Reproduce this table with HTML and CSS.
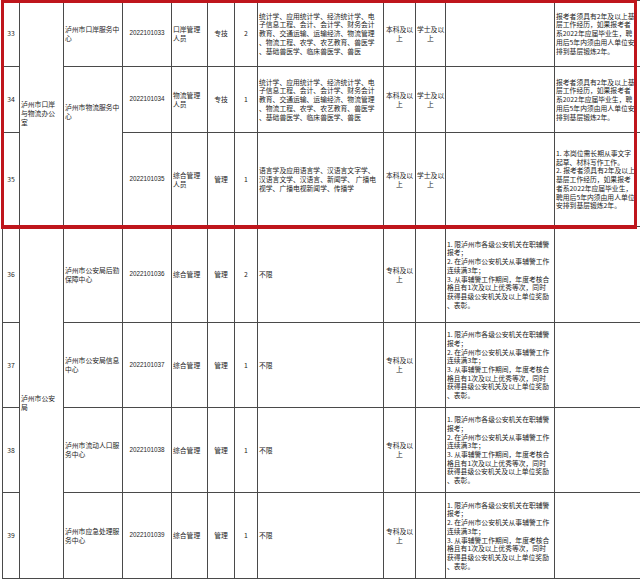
FILE: index.html
```html
<!DOCTYPE html>
<html lang="zh-CN">
<head>
<meta charset="utf-8">
<title>岗位表</title>
<link rel="stylesheet" href="styles.css">
</head>
<body>
<div class="sheet">
  <table class="grid">
    <colgroup>
      <col class="w1"><col class="w2"><col class="w3"><col class="w4"><col class="w5"><col class="w6">
      <col class="w7"><col class="w8"><col class="w9"><col class="w10"><col class="w11"><col class="w12">
    </colgroup>
    <tr class="r33">
      <td class="c">33</td>
      <td class="l" rowspan="3">泸州市口岸<br>与物流办公<br>室</td>
      <td class="l">泸州市口岸服务中<br>心</td>
      <td class="c num">2022101033</td>
      <td class="l">口岸管理<br>人员</td>
      <td class="c">专技</td>
      <td class="c">2</td>
      <td class="l">统计学、应用统计学、经济统计学、电<br>子信息工程、会计、会计学、财务会计<br>教育、交通运输、运输经济、物流管理<br>、物流工程、农学、农艺教育、兽医学<br>、基础兽医学、临床兽医学、兽医</td>
      <td class="c">本科及以<br>上</td>
      <td class="c">学士及以<br>上</td>
      <td></td>
      <td class="l">报考者须具有2年及以上基<br>层工作经历，如果报考者<br>系2022年应届毕业生，聘<br>用后5年内须由用人单位安<br>排到基层锻炼2年。</td>
    </tr>
    <tr class="r34">
      <td class="c">34</td>
      <td class="l top" rowspan="2">泸州市物流服务中<br>心</td>
      <td class="c num">2022101034</td>
      <td class="l">物流管理<br>人员</td>
      <td class="c">专技</td>
      <td class="c">1</td>
      <td class="l">统计学、应用统计学、经济统计学、电<br>子信息工程、会计、会计学、财务会计<br>教育、交通运输、运输经济、物流管理<br>、物流工程、农学、农艺教育、兽医学<br>、基础兽医学、临床兽医学、兽医</td>
      <td class="c">本科及以<br>上</td>
      <td class="c">学士及以<br>上</td>
      <td></td>
      <td class="l">报考者须具有2年及以上基<br>层工作经历，如果报考者<br>系2022年应届毕业生，聘<br>用后5年内须由用人单位安<br>排到基层锻炼2年。</td>
    </tr>
    <tr class="r35">
      <td class="c">35</td>
      <td class="c num">2022101035</td>
      <td class="l">综合管理<br>人员</td>
      <td class="c">管理</td>
      <td class="c">1</td>
      <td class="l">语言学及应用语言学、汉语言文字学、<br>汉语言文学、汉语言、新闻学、 广播电<br>视学、广播电视新闻学、传播学</td>
      <td class="c">本科及以<br>上</td>
      <td class="c">学士及以<br>上</td>
      <td></td>
      <td class="l">1. 本岗位需长期从事文字<br>起草、材料写作工作。<br>2. 报考者须具有2年及以上<br>基层工作经历，如果报考<br>者系2022年应届毕业生，<br>聘用后5年内须由用人单位<br>安排到基层锻炼2年。</td>
    </tr>
    <tr class="r36">
      <td class="c">36</td>
      <td class="l" rowspan="4">泸州市公安<br>局</td>
      <td class="l">泸州市公安局后勤<br>保障中心</td>
      <td class="c num">2022101036</td>
      <td class="l">综合管理</td>
      <td class="c">管理</td>
      <td class="c">2</td>
      <td class="l">不限</td>
      <td class="c">专科及以<br>上</td>
      <td></td>
      <td class="l">1. 限泸州市各级公安机关在职辅警<br>报考；<br>2. 在泸州市公安机关从事辅警工作<br>连续满3年；<br>3. 从事辅警工作期间，年度考核合<br>格且有1次及以上优秀等次，同时<br>获得县级公安机关及以上单位奖励<br>、表彰。</td>
      <td></td>
    </tr>
    <tr class="r37">
      <td class="c">37</td>
      <td class="l">泸州市公安局信息<br>中心</td>
      <td class="c num">2022101037</td>
      <td class="l">综合管理</td>
      <td class="c">管理</td>
      <td class="c">1</td>
      <td class="l">不限</td>
      <td class="c">专科及以<br>上</td>
      <td></td>
      <td class="l">1. 限泸州市各级公安机关在职辅警<br>报考；<br>2. 在泸州市公安机关从事辅警工作<br>连续满3年；<br>3. 从事辅警工作期间，年度考核合<br>格且有1次及以上优秀等次，同时<br>获得县级公安机关及以上单位奖励<br>、表彰。</td>
      <td></td>
    </tr>
    <tr class="r38">
      <td class="c">38</td>
      <td class="l">泸州市流动人口服<br>务中心</td>
      <td class="c num">2022101038</td>
      <td class="l">综合管理</td>
      <td class="c">管理</td>
      <td class="c">1</td>
      <td class="l">不限</td>
      <td class="c">专科及以<br>上</td>
      <td></td>
      <td class="l">1. 限泸州市各级公安机关在职辅警<br>报考；<br>2. 在泸州市公安机关从事辅警工作<br>连续满3年；<br>3. 从事辅警工作期间，年度考核合<br>格且有1次及以上优秀等次，同时<br>获得县级公安机关及以上单位奖励<br>、表彰。</td>
      <td></td>
    </tr>
    <tr class="r39">
      <td class="c">39</td>
      <td class="l">泸州市应急处理服<br>务中心</td>
      <td class="c num">2022101039</td>
      <td class="l">综合管理</td>
      <td class="c">管理</td>
      <td class="c">1</td>
      <td class="l">不限</td>
      <td class="c">专科及以<br>上</td>
      <td></td>
      <td class="l">1. 限泸州市各级公安机关在职辅警<br>报考；<br>2. 在泸州市公安机关从事辅警工作<br>连续满3年；<br>3. 从事辅警工作期间，年度考核合<br>格且有1次及以上优秀等次，同时<br>获得县级公安机关及以上单位奖励<br>、表彰。</td>
      <td></td>
    </tr>
  </table>
  <div class="highlight"></div>
</div>
</body>
</html>
```
FILE: styles.css
```css
html, body {
  margin: 0;
  padding: 0;
  background: #ffffff;
}
.sheet {
  position: relative;
  width: 640px;
  height: 580px;
  overflow: hidden;
  background: #ffffff;
}
.grid {
  margin-left: 2px;
  border-collapse: collapse;
  table-layout: fixed;
  width: 644px;
  font-family: "Noto Sans CJK SC", "Noto Sans", sans-serif;
  font-size: 6.8px;
  line-height: 8.7px;
  color: #1c1c1c;
}
.grid td {
  border: 1px solid #4a4a4a;
  padding: 0 1px;
  vertical-align: middle;
  white-space: nowrap;
  overflow: visible;
}
.w1 { width: 17px; }
.w2 { width: 44px; }
.w3 { width: 59px; }
.w4 { width: 49px; }
.w5 { width: 36px; }
.w6 { width: 27px; }
.w7 { width: 23px; }
.w8 { width: 126px; }
.w9 { width: 32px; }
.w10 { width: 30px; }
.w11 { width: 109px; }
.w12 { width: 92px; }
.c { text-align: center; }
.l { text-align: left; }
.num {
  font-family: "Liberation Sans", "Noto Sans", sans-serif;
  font-size: 6.3px;
}
.top {
  vertical-align: top !important;
  padding-top: 36px !important;
}
.r33 { height: 66px; }
.r34 { height: 66px; }
.r35 { height: 94px; }
.r36 { height: 96px; }
.r37 { height: 85px; }
.r38 { height: 85px; }
.r39 { height: 86px; }
.highlight {
  position: absolute;
  left: 1px;
  top: 0;
  width: 636px;
  height: 229px;
  border: 3px solid #bf161c;
  border-bottom-width: 4px;
  box-sizing: border-box;
}
```
